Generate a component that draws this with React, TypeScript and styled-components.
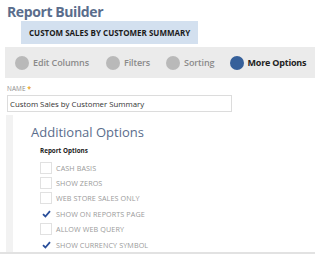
import styled, { createGlobalStyle } from "styled-components";

const GlobalStyle = createGlobalStyle`
  html, body {
    margin: 0;
    padding: 0;
    background: #fff;
    font-family: "Open Sans", "Liberation Sans", sans-serif;
  }
`;

const Page = styled.div`
  width: 315px;
  height: 254px;
  overflow: hidden;
  border-bottom: 2px solid #e2e2e2;
  box-sizing: border-box;
`;

const Title = styled.h1`
  margin: 0;
  padding: 3px 0 0 7px;
  font-size: 14px;
  line-height: 18px;
  font-weight: 700;
  letter-spacing: -0.4px;
  color: #5a6d8c;
`;

const RecordName = styled.div`
  margin-left: 21px;
  width: 177px;
  height: 23px;
  background: #d3e0ef;
  display: flex;
  align-items: center;
  padding-left: 8px;
  box-sizing: border-box;
  font-size: 8px;
  font-weight: 700;
  color: #1b1b1b;
`;

const StepBar = styled.div`
  margin: 3px 0 0 5px;
  height: 31px;
  background: #ebebeb;
  display: flex;
  align-items: center;
  padding-left: 10px;
`;

const Step = styled.div<{ $gap: number }>`
  display: flex;
  align-items: center;
  margin-right: ${(p) => p.$gap}px;
`;

const Dot = styled.span<{ $active?: boolean }>`
  width: 14px;
  height: 14px;
  border-radius: 50%;
  background: ${(p) => (p.$active ? "#36609a" : "#b9b9b9")};
  margin-right: ${(p) => (p.$active ? 3 : 4)}px;
`;

const StepLabel = styled.span<{ $active?: boolean }>`
  font-size: 9px;
  font-weight: ${(p) => (p.$active ? 700 : 600)};
  color: ${(p) => (p.$active ? "#222" : "#8a8a8a")};
  white-space: nowrap;
  letter-spacing: ${(p) => (p.$active ? "-0.2px" : "-0.1px")};
`;

const Field = styled.div`
  padding: 6px 0 0 7px;
`;

const FieldLabel = styled.div`
  font-size: 6.4px;
  line-height: 9px;
  color: #8c8c8c;
  letter-spacing: 0.1px;
`;

const Required = styled.span`
  color: #e8a317;
  font-weight: 700;
  margin-left: 2px;
`;

const TextInput = styled.div`
  margin-top: 2px;
  width: 225px;
  height: 17px;
  border: 1px solid #dcdcdc;
  box-sizing: border-box;
  display: flex;
  align-items: center;
  padding-left: 2px;
  font-size: 7.8px;
  color: #333;
`;

const Section = styled.div`
  margin: 3px 0 0 6px;
  border-left: 7px solid #f2f2f2;
  padding: 9px 0 0 18px;
  height: 140px;
`;

const SectionTitle = styled.h2`
  margin: 0;
  font-size: 13px;
  line-height: 16px;
  font-weight: 400;
  color: #5a6d8c;
`;

const GroupTitle = styled.div`
  margin: 6px 0 0 9px;
  font-size: 6.3px;
  font-weight: 700;
  color: #222;
`;

const OptionList = styled.div`
  margin: 5px 0 0 9px;
  display: flex;
  flex-direction: column;
`;

const Option = styled.div`
  display: flex;
  align-items: center;
  height: 15.4px;
`;

const Box = styled.span`
  width: 12px;
  height: 12px;
  box-sizing: border-box;
  border: 1px solid #e1e1e1;
  display: flex;
  align-items: center;
  justify-content: center;
  margin-right: 4px;
`;

const TickBox = styled(Box)`
  border-color: transparent;
`;

const OptionLabel = styled.span`
  font-size: 7.2px;
  color: #9a9a9a;
  letter-spacing: 0.1px;
`;

const Check = () => (
  <svg width="9" height="8" viewBox="0 0 9 8">
    <path d="M1 4.2 L3.4 6.5 L8 1.2" fill="none" stroke="#2a4f9a" strokeWidth="1.8" />
  </svg>
);

const steps = [
  { label: "Edit Columns", gap: 17 },
  { label: "Filters", gap: 16 },
  { label: "Sorting", gap: 16 },
  { label: "More Options", gap: 0, active: true },
];

const options = [
  { label: "CASH BASIS", checked: false },
  { label: "SHOW ZEROS", checked: false },
  { label: "WEB STORE SALES ONLY", checked: false },
  { label: "SHOW ON REPORTS PAGE", checked: true },
  { label: "ALLOW WEB QUERY", checked: false },
  { label: "SHOW CURRENCY SYMBOL", checked: true },
];

export default function App() {
  return (
    <>
      <GlobalStyle />
      <Page>
        <Title>Report Builder</Title>
        <RecordName>CUSTOM SALES BY CUSTOMER SUMMARY</RecordName>
        <StepBar>
          {steps.map((s) => (
            <Step key={s.label} $gap={s.gap}>
              <Dot $active={s.active} />
              <StepLabel $active={s.active}>{s.label}</StepLabel>
            </Step>
          ))}
        </StepBar>
        <Field>
          <FieldLabel>
            NAME<Required>*</Required>
          </FieldLabel>
          <TextInput>Custom Sales by Customer Summary</TextInput>
        </Field>
        <Section>
          <SectionTitle>Additional Options</SectionTitle>
          <GroupTitle>Report Options</GroupTitle>
          <OptionList>
            {options.map((o) => (
              <Option key={o.label}>
                {o.checked ? (
                  <TickBox>
                    <Check />
                  </TickBox>
                ) : (
                  <Box />
                )}
                <OptionLabel>{o.label}</OptionLabel>
              </Option>
            ))}
          </OptionList>
        </Section>
      </Page>
    </>
  );
}
